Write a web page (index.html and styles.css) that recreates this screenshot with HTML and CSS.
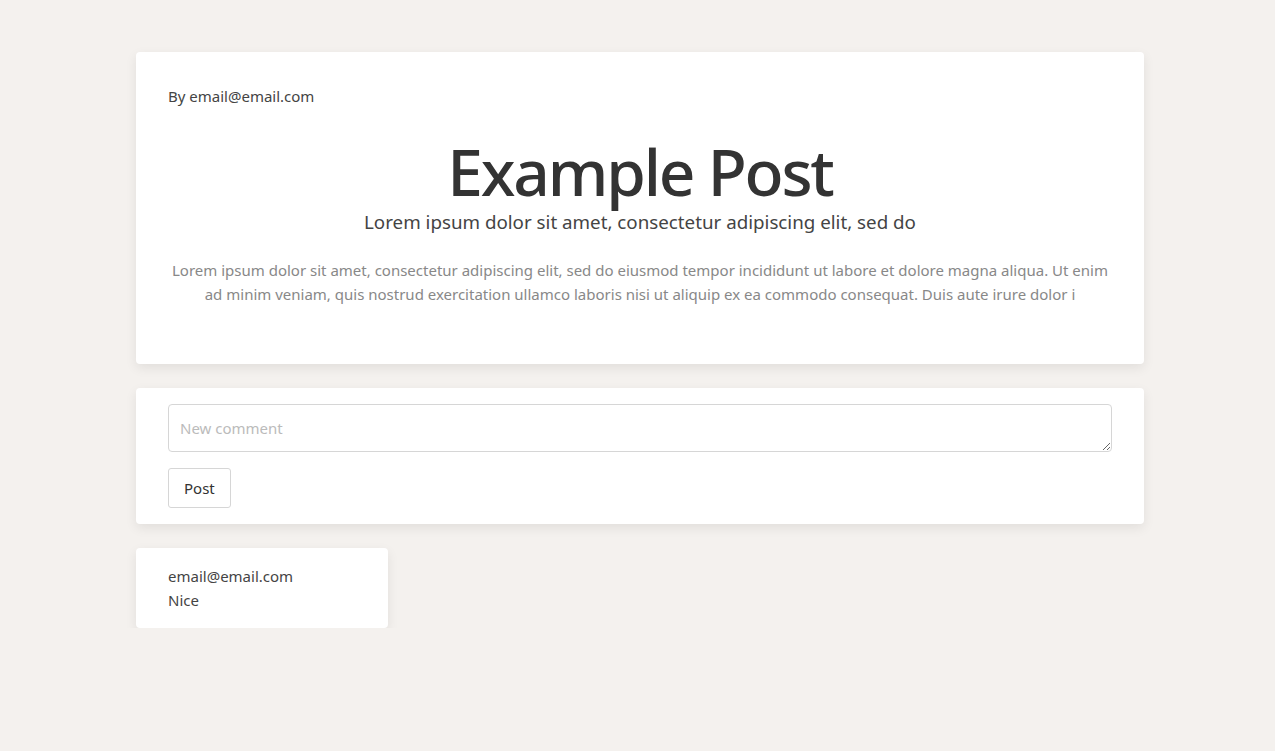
FILE: index.html
```html
<!DOCTYPE html>
<html>
<head>
<meta charset="utf-8">
<link rel="stylesheet" href="styles.css">
</head>
<body>
<main class="page">
  <article class="card post">
    <div class="author">By email@email.com</div>
    <h1 class="title">Example Post</h1>
    <h2 class="subtitle">Lorem ipsum dolor sit amet, consectetur adipiscing elit, sed do</h2>
    <p class="body">Lorem ipsum dolor sit amet, consectetur adipiscing elit, sed do eiusmod tempor incididunt ut labore et dolore magna aliqua. Ut enim ad minim veniam, quis nostrud exercitation ullamco laboris nisi ut aliquip ex ea commodo consequat. Duis aute irure dolor i</p>
  </article>
  <section class="card comment-form">
    <textarea class="comment-input" placeholder="New comment"></textarea>
    <button class="post-btn">Post</button>
  </section>
  <div class="card comment">
    <div class="comment-author">email@email.com</div>
    <div class="comment-text">Nice</div>
  </div>
</main>
</body>
</html>
```
FILE: styles.css
```css
* { box-sizing: border-box; }
html, body { margin: 0; padding: 0; }
body {
  background: #f4f1ee;
  font-family: "Noto Sans", "Open Sans", sans-serif;
  color: #333;
}
.page {
  width: 1008px;
  margin: 52px 0 0 136px;
  display: flex;
  flex-direction: column;
  align-items: flex-start;
  gap: 24px;
}
.card {
  background: #fff;
  border-radius: 4px;
  box-shadow: 0 4px 12px rgba(0,0,0,0.08);
}
.post {
  width: 100%;
  padding: 33px 32px 58px;
}
.author {
  font-size: 15px;
  line-height: 22px;
  color: #444;
}
.title {
  margin: 29px 0 0;
  text-align: center;
  font-size: 64px;
  line-height: 72px;
  font-weight: 500;
  letter-spacing: -2.2px;
  color: #333;
}
.subtitle {
  margin: 0;
  text-align: center;
  font-size: 18.75px;
  line-height: 28px;
  font-weight: 400;
  color: #444;
}
.body {
  margin: 22px 0 0;
  text-align: center;
  font-size: 15px;
  line-height: 24px;
  color: #888;
}
.comment-form {
  width: 100%;
  padding: 16px 32px;
  display: flex;
  flex-direction: column;
  align-items: flex-start;
  gap: 16px;
}
.comment-input {
  width: 100%;
  height: 48px;
  border: 1px solid #d6d6d6;
  border-radius: 4px;
  padding: 12px 11px;
  font-family: inherit;
  font-size: 15px;
  line-height: 22px;
  color: #333;
  resize: vertical;
}
.comment-input::placeholder { color: #bbb; }
.post-btn {
  height: 40px;
  padding: 0 15px;
  background: #fff;
  border: 1px solid #d6d6d6;
  border-radius: 3px;
  font-family: inherit;
  font-size: 15px;
  color: #333;
}
.comment {
  width: 252px;
  padding: 16px 32px;
  font-size: 15px;
  line-height: 24px;
  color: #444;
}
```
